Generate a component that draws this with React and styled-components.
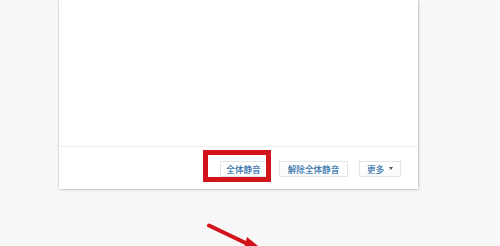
import React from "react";
import styled, { createGlobalStyle } from "styled-components";

const Global = createGlobalStyle`
  html, body { margin: 0; padding: 0; background: #f8f8f8; }
  body { width: 500px; height: 246px; overflow: hidden; position: relative;
    font-family: "Noto Sans CJK SC", "Liberation Sans", sans-serif; }
`;

const Stage = styled.div`
  position: relative;
  width: 500px;
  height: 246px;
  padding-left: 59px;
  box-sizing: border-box;
`;

const Panel = styled.div`
  width: 359px;
  height: 189px;
  background: #fff;
  box-shadow: 0 0 2px rgba(0,0,0,0.28), 1px 1px 3px rgba(0,0,0,0.12);
  display: flex;
  flex-direction: column;
`;

const Body = styled.div`
  flex: 0 0 146px;
  border-bottom: 1px solid #ececec;
`;

const Footer = styled.div`
  flex: 1;
  display: flex;
  align-items: center;
  justify-content: flex-end;
  padding: 1px 17px 0 0;
  gap: 12px;
`;

const Button = styled.button`
  height: 16px;
  width: ${(p) => p.$w}px;
  box-sizing: border-box;
  border: 1px solid #dfe6ec;
  background: linear-gradient(#ffffff, #f9fbfc);
  color: #3472aa;
  font-family: "Noto Sans CJK SC", sans-serif;
  font-size: 8.6px;
  line-height: 14px;
  padding: 0;
  display: flex;
  align-items: center;
  justify-content: center;
  gap: 3px;
  margin-left: ${(p) => p.$ml || 0}px;
  text-shadow: 0 0 0.3px rgba(52,114,170,0.6);
`;

const Caret = styled.span`
  width: 0;
  height: 0;
  border-left: 2px solid transparent;
  border-right: 2px solid transparent;
  border-top: 3px solid #555;
  margin-left: 2px;
`;

const Highlight = styled.div`
  position: absolute;
  left: 203px;
  top: 150px;
  width: 68px;
  height: 32px;
  box-sizing: border-box;
  border: 5px solid #d3131b;
`;

const Arrow = styled.svg`
  position: absolute;
  left: 0;
  top: 0;
  pointer-events: none;
`;

export default function App() {
  return (
    <>
      <Global />
      <Stage>
        <Panel>
          <Body />
          <Footer>
            <Button $w={47}>全体静音</Button>
            <Button $w={69}>解除全体静音</Button>
            <Button $w={42} $ml={-1}>更多<Caret /></Button>
          </Footer>
        </Panel>
        <Highlight />
        <Arrow width="500" height="246" viewBox="0 0 500 246">
          <line x1="209" y1="225.5" x2="252" y2="246" stroke="#d3131b" strokeWidth="4" strokeLinecap="round" />
          <polygon points="247,237 263,250 243,252" fill="#d3131b" />
        </Arrow>
      </Stage>
    </>
  );
}
